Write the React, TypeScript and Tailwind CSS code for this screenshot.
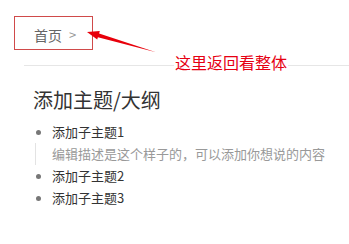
const FONT = { fontFamily: '"Noto Sans CJK SC", "Microsoft YaHei", sans-serif' }

const ITEMS = [
  { title: '添加子主题1', desc: '编辑描述是这个样子的，可以添加你想说的内容' },
  { title: '添加子主题2' },
  { title: '添加子主题3' },
]

export default function App() {
  return (
    <div className="relative w-[349px] h-[244px] bg-white overflow-hidden" style={FONT}>
      {/* breadcrumb */}
      <div className="pt-[25px] pl-[34px] h-[45px] flex items-center text-[14px] leading-[20px] text-[#666]">
        <span>首页</span>
        <span className="ml-[7px] text-[#999] text-[13px]">&gt;</span>
      </div>
      <div className="ml-[24px] mt-[20px] border-t border-[#e6e6e6]" />

      {/* title */}
      <div className="pl-[33px] mt-[22px] text-[20px] leading-[24px] text-[#333]">添加主题/大纲</div>

      {/* outline */}
      <ul className="pl-[35px] mt-[9px] text-[13px] leading-[22px]">
        {ITEMS.map(it => (
          <li key={it.title}>
            <div className="flex items-center h-[22px]">
              <span className="w-[5px] h-[5px] rounded-full bg-[#777] ml-[1px]" />
              <span className="ml-[11px] text-[#333]">{it.title}</span>
            </div>
            {it.desc && (
              <div className="border-l border-[#e3e3e3] pl-[16px] h-[22px] text-[#999] whitespace-nowrap">{it.desc}</div>
            )}
          </li>
        ))}
      </ul>

      {/* annotation overlay */}
      <div className="absolute left-[14px] top-[16px] w-[79px] h-[34px] border border-[#d04a4a]" />
      <svg className="absolute left-0 top-0" width="349" height="244" viewBox="0 0 349 244">
        <polygon
          points="87,32 99.8,31 99.1,33.4 156,52.3 97.9,37.2 97.2,39.6"
          fill="#e8000b"
        />
      </svg>
      <span className="absolute left-[174px] top-[52px] px-[1px] bg-white text-[16px] leading-[20px] text-[#e60012]">
        这里返回看整体
      </span>
    </div>
  )
}
